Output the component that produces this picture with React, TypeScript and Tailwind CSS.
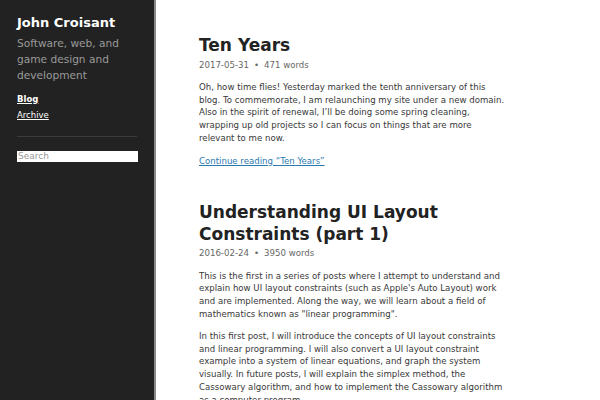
import React from "react";

const posts = [
  {
    title: "Ten Years",
    date: "2017-05-31",
    words: "471 words",
    paras: [
      "Oh, how time flies! Yesterday marked the tenth anniversary of this blog. To commemorate, I am relaunching my site under a new domain. Also in the spirit of renewal, I’ll be doing some spring cleaning, wrapping up old projects so I can focus on things that are more relevant to me now.",
    ],
    more: "Continue reading “Ten Years”",
  },
  {
    title: "Understanding UI Layout Constraints (part 1)",
    date: "2016-02-24",
    words: "3950 words",
    paras: [
      "This is the first in a series of posts where I attempt to understand and explain how UI layout constraints (such as Apple's Auto Layout) work and are implemented. Along the way, we will learn about a field of mathematics known as \"linear programming\".",
      "In this first post, I will introduce the concepts of UI layout constraints and linear programming. I will also convert a UI layout constraint example into a system of linear equations, and graph the system visually. In future posts, I will explain the simplex method, the Cassowary algorithm, and how to implement the Cassowary algorithm as a computer program.",
    ],
    more: "",
  },
];

const App: React.FC = () => {
  return (
    <div className="flex h-[400px] w-[600px] overflow-hidden bg-white font-['DejaVu_Sans',sans-serif]">
      {/* Sidebar */}
      <aside className="w-[156px] shrink-0 bg-[#222] border-r-2 border-[#8a8a8a] px-[17px] pt-[14px]">
        <h1 className="text-[13px] leading-[18px] font-bold text-white">John Croisant</h1>
        <p className="mt-[3px] text-[10.6px] leading-[16px] text-[#9a9a9a]">
          Software, web, and game design and development
        </p>
        <nav className="mt-[8px] flex flex-col text-[8.5px] leading-[16px] text-white">
          <a href="#" className="font-bold underline">Blog</a>
          <a href="#" className="underline">Archive</a>
        </nav>
        <hr className="mt-[13px] border-t border-[#3c3c3c]" />
        <input
          placeholder="Search"
          className="mt-[14px] block h-[11px] w-[121px] bg-white px-[1px] text-[9px] leading-[11px] text-[#333] placeholder:text-[#999] outline-none"
        />
      </aside>

      {/* Main */}
      <main className="flex-1 pl-[43px] pt-[35px]">
        <div className="w-[309px]">
          {posts.map((p) => (
            <article key={p.title} className="mb-[35px]">
              <h2 className="text-[17px] leading-[21.5px] font-bold text-[#222]">{p.title}</h2>
              <div className="mt-[2px] text-[8.6px] leading-[13px] text-[#666]">
                {p.date}
                <span className="mx-[5px]">•</span>
                {p.words}
              </div>
              {p.paras.map((t, i) => (
                <p key={i} className="mt-[9.5px] text-[8.6px] leading-[12.7px] text-[#383838]">
                  {t}
                </p>
              ))}
              {p.more && (
                <a href="#" className="mt-[10px] block text-[8.6px] leading-[12.7px] text-[#2a7ab0] underline">
                  {p.more}
                </a>
              )}
            </article>
          ))}
        </div>
      </main>
    </div>
  );
};

export default App;
